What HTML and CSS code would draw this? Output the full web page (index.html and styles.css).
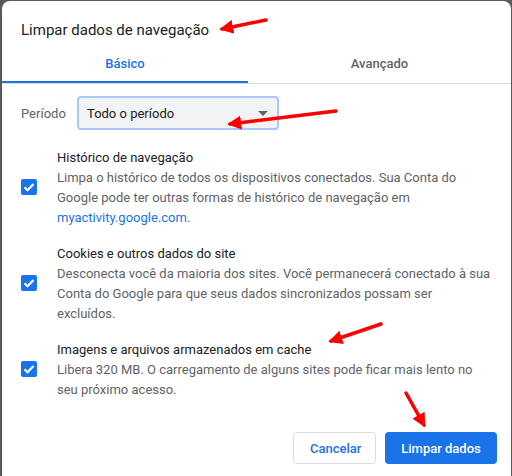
FILE: index.html
```html
<!DOCTYPE html>
<html lang="pt-BR">
<head>
    <meta charset="UTF-8">
    <title>Limpar dados de navegação</title>
    <link rel="stylesheet" href="styles.css">
</head>
<body>
    <div class="dialog">
        <h2 class="dialog-title">Limpar dados de navegação</h2>

        <div class="tabs">
            <div class="tab active">Básico</div>
            <div class="tab">Avançado</div>
        </div>

        <div class="period-row">
            <span class="period-label">Período</span>
            <div class="select">
                <span>Todo o período</span>
                <span class="select-arrow"></span>
            </div>
        </div>

        <div class="options">
            <div class="option">
                <span class="checkbox">
                    <svg viewBox="0 0 16 16" width="16" height="16"><path d="M3.5 8.3l3 3 6-6.2" fill="none" stroke="#fff" stroke-width="2.2"/></svg>
                </span>
                <div class="option-text">
                    <div class="option-title">Histórico de navegação</div>
                    <div class="option-desc">Limpa o histórico de todos os dispositivos conectados. Sua Conta do Google pode ter outras formas de histórico de navegação em <a href="#">myactivity.google.com</a>.</div>
                </div>
            </div>
            <div class="option">
                <span class="checkbox">
                    <svg viewBox="0 0 16 16" width="16" height="16"><path d="M3.5 8.3l3 3 6-6.2" fill="none" stroke="#fff" stroke-width="2.2"/></svg>
                </span>
                <div class="option-text">
                    <div class="option-title">Cookies e outros dados do site</div>
                    <div class="option-desc">Desconecta você da maioria dos sites. Você permanecerá conectado à sua Conta do Google para que seus dados sincronizados possam ser excluídos.</div>
                </div>
            </div>
            <div class="option">
                <span class="checkbox">
                    <svg viewBox="0 0 16 16" width="16" height="16"><path d="M3.5 8.3l3 3 6-6.2" fill="none" stroke="#fff" stroke-width="2.2"/></svg>
                </span>
                <div class="option-text">
                    <div class="option-title">Imagens e arquivos armazenados em cache</div>
                    <div class="option-desc">Libera 320 MB. O carregamento de alguns sites pode ficar mais lento no seu próximo acesso.</div>
                </div>
            </div>
        </div>

        <div class="actions">
            <button class="btn btn-cancel">Cancelar</button>
            <button class="btn btn-primary">Limpar dados</button>
        </div>
    </div>

    <!-- red marker arrows drawn on top of the dialog -->
    <svg class="markers" width="512" height="476" viewBox="0 0 512 476">
        <defs>
            <marker id="head" viewBox="0 0 10 10" refX="8" refY="5" markerWidth="4" markerHeight="4" orient="auto">
                <path d="M0 0L10 5L0 10z" fill="#f00"/>
            </marker>
        </defs>
        <g stroke="#f00" stroke-width="3.5" stroke-linecap="round" fill="none" marker-end="url(#head)">
            <line x1="266" y1="20" x2="222" y2="29"/>
            <line x1="336" y1="111" x2="230" y2="124"/>
            <line x1="381" y1="324" x2="331" y2="341"/>
            <line x1="406" y1="393" x2="424" y2="425"/>
        </g>
    </svg>
</body>
</html>
```

FILE: styles.css
```css
body {
    margin: 0;
    padding: 1px 0 0 2px;
    background-color: #5a5a5a;
    font-family: Roboto, "Liberation Sans", sans-serif;
    height: 476px;
    box-sizing: border-box;
    overflow: hidden;
    position: relative;
}

.dialog {
    width: 509px;
    height: 475px;
    background-color: #fff;
    border-radius: 8px 8px 0 0;
    box-sizing: border-box;
}

.dialog-title {
    margin: 0;
    padding: 17px 19px 0;
    font-size: 15px;
    font-weight: 400;
    line-height: 24px;
    color: #202124;
}

.tabs {
    display: flex;
    margin-top: 4px;
    border-bottom: 1px solid #dadce0;
}

.tab {
    width: 246px;
    height: 37px;
    box-sizing: border-box;
    text-align: center;
    line-height: 36px;
    font-size: 13px;
    font-weight: 500;
    color: #5f6368;
}

.tab + .tab {
    flex: 1;
}

.tab.active {
    color: #1a73e8;
    border-bottom: 2px solid #1a73e8;
}

.period-row {
    display: flex;
    align-items: center;
    padding: 12px 0 0 19px;
}

.period-label {
    font-size: 13px;
    color: #5f6368;
    width: 56px;
}

.select {
    display: flex;
    align-items: center;
    justify-content: space-between;
    width: 202px;
    height: 34px;
    box-sizing: border-box;
    padding: 0 9px 0 8px;
    border: 2px solid #a8c7fa;
    border-radius: 4px;
    background-color: #f1f3f4;
    font-size: 13px;
    color: #202124;
}

.select-arrow {
    width: 0;
    height: 0;
    border-left: 5px solid transparent;
    border-right: 5px solid transparent;
    border-top: 5px solid #5f6368;
}

.options {
    display: flex;
    flex-direction: column;
    gap: 16px;
    padding: 18px 0 0 19px;
}

.option {
    display: flex;
    align-items: center;
}

.checkbox {
    flex: none;
    width: 16px;
    height: 16px;
    border-radius: 2px;
    background-color: #1a73e8;
    margin: -3px 20px 0 0;
}

.checkbox svg {
    display: block;
}

.option-text {
    width: 436px;
    font-size: 13px;
    line-height: 20px;
}

.option-title {
    color: #202124;
}

.option-desc {
    color: #5f6368;
}

.option-desc a {
    color: #1a73e8;
    text-decoration: none;
}

.actions {
    display: flex;
    justify-content: flex-end;
    gap: 9px;
    padding: 32px 14px 0 0;
}

.btn {
    height: 32px;
    border-radius: 4px;
    font-family: inherit;
    font-size: 13px;
    font-weight: 500;
    padding: 0 16px;
    cursor: pointer;
}

.btn-cancel {
    width: 83px;
    background-color: #fff;
    border: 1px solid #dadce0;
    color: #1a73e8;
}

.btn-primary {
    width: 112px;
    background-color: #1a73e8;
    border: none;
    color: #fff;
}

.markers {
    position: absolute;
    top: 0;
    left: 0;
    pointer-events: none;
}
```
